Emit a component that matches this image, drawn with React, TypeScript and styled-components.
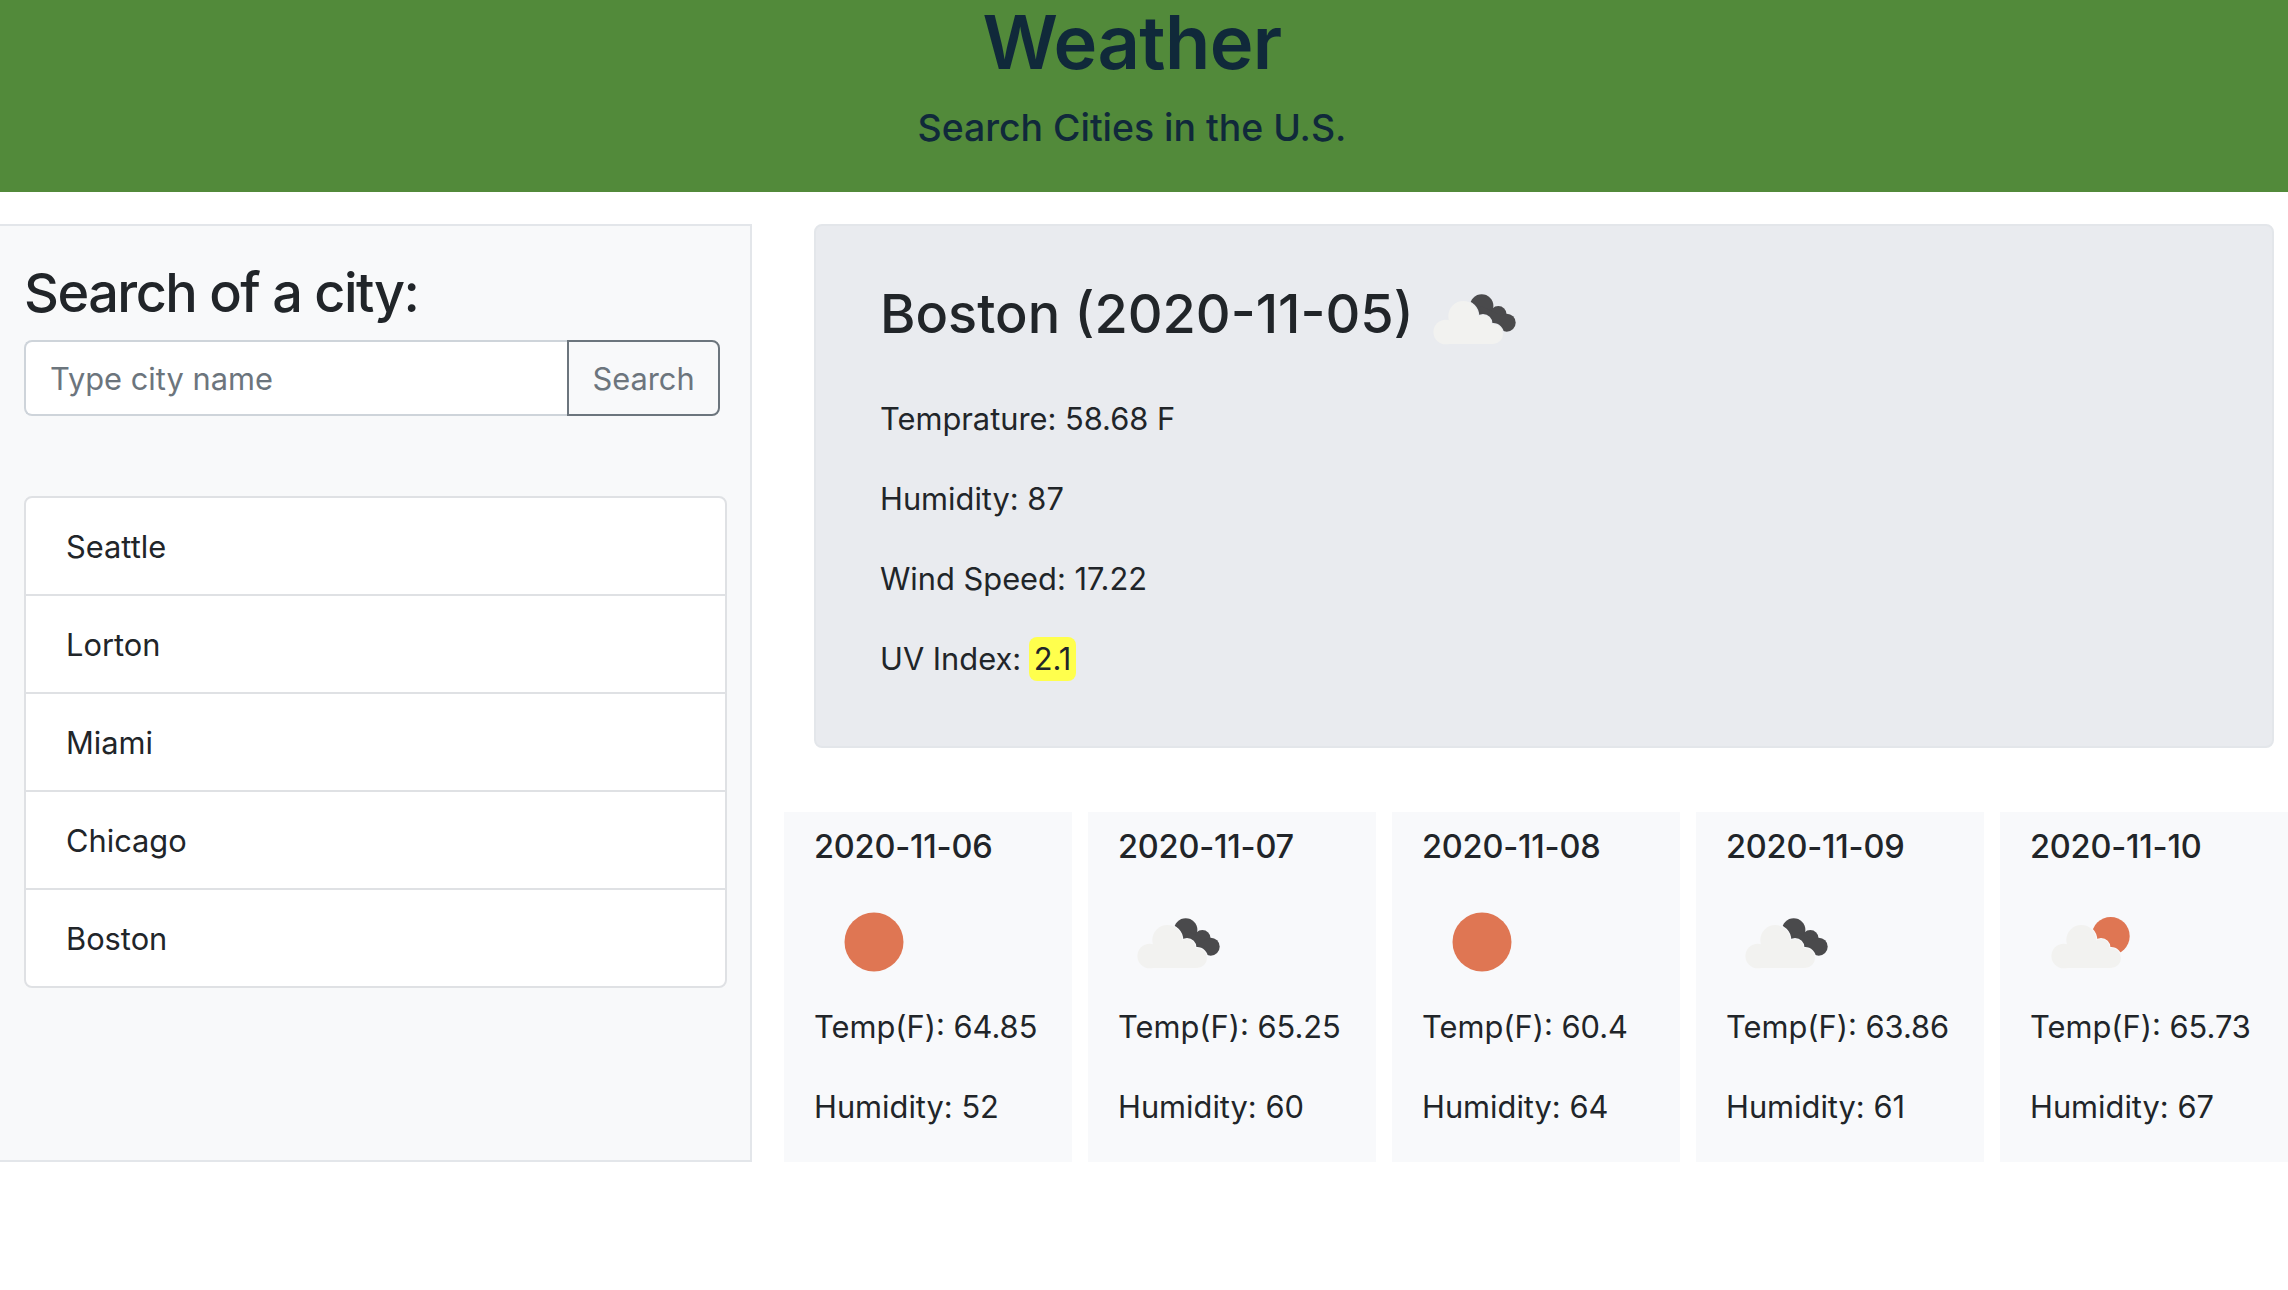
import React from "react";
import styled, { createGlobalStyle } from "styled-components";

const Global = createGlobalStyle`
  html, body { margin: 0; padding: 0; background: #fff; }
  body { font-family: Inter, "Liberation Sans", sans-serif; color: #212529; font-size: 30.8px; line-height: 1.5; }
  * { box-sizing: border-box; }
`;

const Page = styled.div`
  width: 2288px;
  height: 1290px;
  overflow: hidden;
`;

const Header = styled.header`
  height: 192px;
  padding-right: 24px;
  background: #528a3a;
  color: #10293a;
  text-align: center;
  overflow: hidden;
`;

const Title = styled.h1`
  margin: 0;
  font-size: 74px;
  font-weight: 600;
  letter-spacing: -0.6px;
  line-height: 84px;
`;

const Subtitle = styled.p`
  margin: 23px 0 0;
  font-size: 37.4px;
  font-weight: 500;
  line-height: 42px;
`;

const Main = styled.main`
  display: grid;
  grid-template-columns: 752px 1fr;
  margin-top: 32px;
  align-items: start;
`;

const Sidebar = styled.aside`
  height: 938px;
  background: #f8f9fa;
  border: 2px solid #e3e6ea;
  border-left: 0;
  padding: 29px 24px 0 24px;
`;

const SideTitle = styled.h2`
  margin: 0 0 9px;
  font-size: 54px;
  font-weight: 500;
  letter-spacing: -1.5px;
  line-height: 76px;
`;

const SearchRow = styled.div`
  display: flex;
  width: 696px;
  height: 76px;
  margin-bottom: 80px;
`;

const CityInput = styled.input`
  flex: 1;
  min-width: 0;
  height: 100%;
  padding: 0 24px;
  border: 2px solid #ced4da;
  border-right: 0;
  border-radius: 8px 0 0 8px;
  background: #fff;
  font: inherit;
  &::placeholder { color: #6c757d; opacity: 1; }
`;

const SearchButton = styled.button`
  width: 153px;
  height: 100%;
  padding: 2px 0 0;
  border: 2px solid #6c757d;
  border-radius: 0 8px 8px 0;
  background: transparent;
  color: #6c757d;
  font: inherit;
`;

const CityList = styled.ul`
  width: 703px;
  margin: 0;
  padding: 0;
  list-style: none;
  border: 2px solid #dfe1e4;
  border-radius: 8px;
  background: #fff;
`;

const CityItem = styled.li`
  height: 98px;
  padding: 2px 40px 0;
  display: flex;
  align-items: center;
  border-top: 2px solid #dfe1e4;
  &:first-child { border-top: 0; height: 96px; }
`;

const Content = styled.section`
  min-width: 0;
  padding-left: 32px;
`;

const Jumbotron = styled.div`
  width: 1460px;
  height: 524px;
  margin-left: 30px;
  padding: 24px 64px 0;
  background: #e9ebef;
  border: 2px solid #e3e6ea;
  border-radius: 8px;
`;

const CityHeading = styled.h2`
  display: flex;
  align-items: center;
  margin: 0;
  height: 129px;
  font-size: 54px;
  font-weight: 500;
  line-height: 1.2;
  svg { margin-top: 6px; }
`;

const Line = styled.p`
  margin: 0;
  height: 80px;
  line-height: 80px;
`;

const Uv = styled.span`
  display: inline-block;
  line-height: 44px;
  padding: 0 5px;
  margin-left: -1px;
  background: #ffff4d;
  border-radius: 8px;
`;

const Forecast = styled.div`
  display: flex;
  gap: 16px;
  margin-top: 64px;
`;

const Card = styled.article`
  flex: 0 0 288px;
  height: 350px;
  padding: 15px 30px 0;
  background: #f8f9fb;
`;

const CardDate = styled.div`
  font-size: 32.5px;
  line-height: 40px;
  font-weight: 500;
  letter-spacing: -0.2px;
`;

const IconWrap = styled.div`
  height: 96px;
  margin: 25px 0 -1px;
`;

const Icon = styled.svg`
  display: block;
  flex: none;
  width: 110px;
  height: 100px;
`;

type Kind = "sun" | "clouds" | "partly";

function Cloud({ halo }: { halo: string }) {
  const shape = (
    <>
      <circle cx="12.7" cy="38" r="12.3" />
      <circle cx="30.3" cy="22" r="15" />
      <circle cx="50" cy="29.5" r="8.5" />
      <circle cx="60" cy="40" r="10" />
      <rect x="12.7" y="30" width="47" height="20" />
    </>
  );
  return (
    <>
      <g fill={halo} stroke={halo} strokeWidth="2">{shape}</g>
      <g fill="#f2f2f0">{shape}</g>
    </>
  );
}

function WeatherIcon({ kind, bg }: { kind: Kind; bg: string }) {
  return (
    <Icon viewBox="0 0 110 100">
      {kind === "sun" && <circle cx="60" cy="50" r="29.5" fill="#df7653" />}
      {kind === "clouds" && (
        <g transform="translate(19 26)">
          <g fill="#4a4a4c">
            <circle cx="48.7" cy="12" r="11.7" />
            <circle cx="65.3" cy="20.3" r="8.3" />
            <circle cx="73.7" cy="28.7" r="9" />
            <path d="M48 12 L65 20 L74 29 L62 37 L40 30 Z" />
          </g>
          <Cloud halo={bg} />
        </g>
      )}
      {kind === "partly" && (
        <g transform="translate(21 26)">
          <circle cx="59.7" cy="18" r="19" fill="#df7653" />
          <Cloud halo={bg} />
        </g>
      )}
    </Icon>
  );
}

const cities = ["Seattle", "Lorton", "Miami", "Chicago", "Boston"];
const days: { date: string; kind: Kind; temp: string; hum: number }[] = [
  { date: "2020-11-06", kind: "sun", temp: "64.85", hum: 52 },
  { date: "2020-11-07", kind: "clouds", temp: "65.25", hum: 60 },
  { date: "2020-11-08", kind: "sun", temp: "60.4", hum: 64 },
  { date: "2020-11-09", kind: "clouds", temp: "63.86", hum: 61 },
  { date: "2020-11-10", kind: "partly", temp: "65.73", hum: 67 },
];

export default function App() {
  return (
    <Page>
      <Global />
      <Header>
        <Title>Weather</Title>
        <Subtitle>Search Cities in the U.S.</Subtitle>
      </Header>
      <Main>
        <Sidebar>
          <SideTitle>Search of a city:</SideTitle>
          <SearchRow>
            <CityInput placeholder="Type city name" />
            <SearchButton>Search</SearchButton>
          </SearchRow>
          <CityList>
            {cities.map((c) => <CityItem key={c}>{c}</CityItem>)}
          </CityList>
        </Sidebar>
        <Content>
          <Jumbotron>
            <CityHeading>
              Boston (2020-11-05)
              <WeatherIcon kind="clouds" bg="#e9ebef" />
            </CityHeading>
            <Line>Temprature: 58.68 F</Line>
            <Line>Humidity: 87</Line>
            <Line>Wind Speed: 17.22</Line>
            <Line>UV Index: <Uv>2.1</Uv></Line>
          </Jumbotron>
          <Forecast>
            {days.map((d) => (
              <Card key={d.date}>
                <CardDate>{d.date}</CardDate>
                <IconWrap><WeatherIcon kind={d.kind} bg="#f8f9fb" /></IconWrap>
                <Line>Temp(F): {d.temp}</Line>
                <Line>Humidity: {d.hum}</Line>
              </Card>
            ))}
          </Forecast>
        </Content>
      </Main>
    </Page>
  );
}
